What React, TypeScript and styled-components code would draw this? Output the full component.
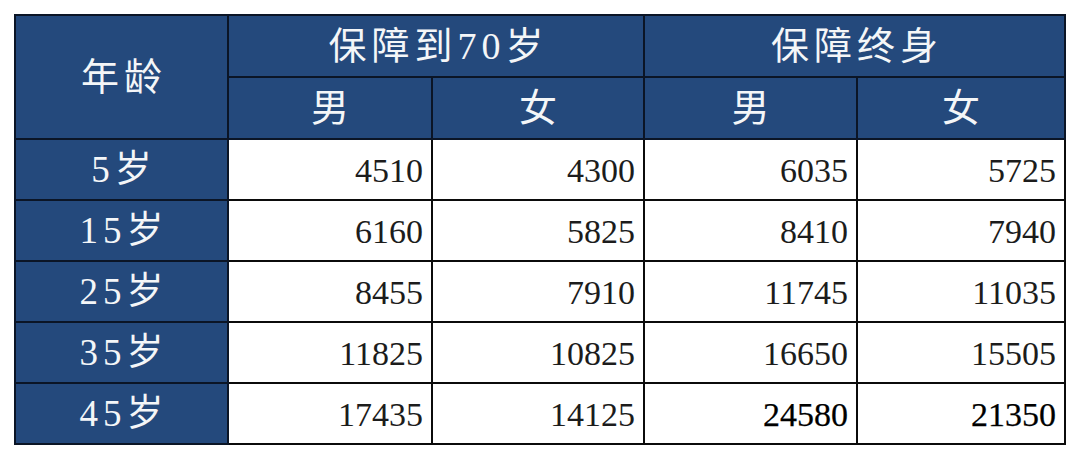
import React from "react";
import styled, { createGlobalStyle } from "styled-components";

const Global = createGlobalStyle`
  html, body { margin: 0; padding: 0; background: #ffffff; }
  body { width: 1080px; height: 460px; overflow: hidden; }
`;

const Page = styled.div`
  padding: 14px 0 0 14px;
`;

const Table = styled.table`
  border-collapse: collapse;
  table-layout: fixed;
  width: 1050px;
  border: 2px solid #1a2433;
`;

const Col = styled.col<{ $w: number }>`
  width: ${(p) => p.$w}px;
`;

const HeadCell = styled.th<{ $size?: number }>`
  background: #24497c;
  color: #f4f6f8;
  font-family: "Liberation Serif", "Noto Sans CJK SC", serif;
  font-weight: 400;
  font-size: ${(p) => p.$size ?? 38}px;
  letter-spacing: 5px;
  text-align: center;
  vertical-align: middle;
  border: 2px solid #0b1526;
  height: 60px;
  padding: 0 0 0 5px;
  line-height: 1;
`;

const AgeCell = styled.th`
  background: #24497c;
  color: #f4f6f8;
  font-family: "Liberation Serif", "Noto Sans CJK SC", serif;
  font-weight: 400;
  font-size: 37px;
  letter-spacing: 5px;
  text-align: center;
  vertical-align: middle;
  border: 2px solid #0b1526;
  height: 59px;
  padding: 0 0 0 5px;
  line-height: 1;
`;

const NumCell = styled.td<{ $strong?: boolean }>`
  background: #ffffff;
  color: ${(p) => (p.$strong ? "#000000" : "#1c1c1c")};
  font-family: "Liberation Serif", serif;
  font-size: 34px;
  font-weight: 400;
  text-align: right;
  vertical-align: middle;
  border: 2px solid #0b0b0b;
  padding: 3px 8px 0 0;
  line-height: 1;
  -webkit-text-stroke: ${(p) => (p.$strong ? "0.25px #000" : "0")};
`;

type Row = { age: string; v: number[]; strong?: boolean[] };

const rows: Row[] = [
  { age: "5岁", v: [4510, 4300, 6035, 5725] },
  { age: "15岁", v: [6160, 5825, 8410, 7940] },
  { age: "25岁", v: [8455, 7910, 11745, 11035] },
  { age: "35岁", v: [11825, 10825, 16650, 15505] },
  { age: "45岁", v: [17435, 14125, 24580, 21350], strong: [false, false, true, true] },
];

export default function App() {
  return (
    <>
      <Global />
      <Page>
        <Table>
          <colgroup>
            <Col $w={213} />
            <Col $w={204} />
            <Col $w={212} />
            <Col $w={213} />
            <Col $w={208} />
          </colgroup>
          <thead>
            <tr>
              <HeadCell rowSpan={2} $size={38}>年龄</HeadCell>
              <HeadCell colSpan={2}>保障到70岁</HeadCell>
              <HeadCell colSpan={2}>保障终身</HeadCell>
            </tr>
            <tr>
              <HeadCell>男</HeadCell>
              <HeadCell>女</HeadCell>
              <HeadCell>男</HeadCell>
              <HeadCell>女</HeadCell>
            </tr>
          </thead>
          <tbody>
            {rows.map((r) => (
              <tr key={r.age}>
                <AgeCell>{r.age}</AgeCell>
                {r.v.map((n, i) => (
                  <NumCell key={i} $strong={r.strong?.[i]}>
                    {n}
                  </NumCell>
                ))}
              </tr>
            ))}
          </tbody>
        </Table>
      </Page>
    </>
  );
}
